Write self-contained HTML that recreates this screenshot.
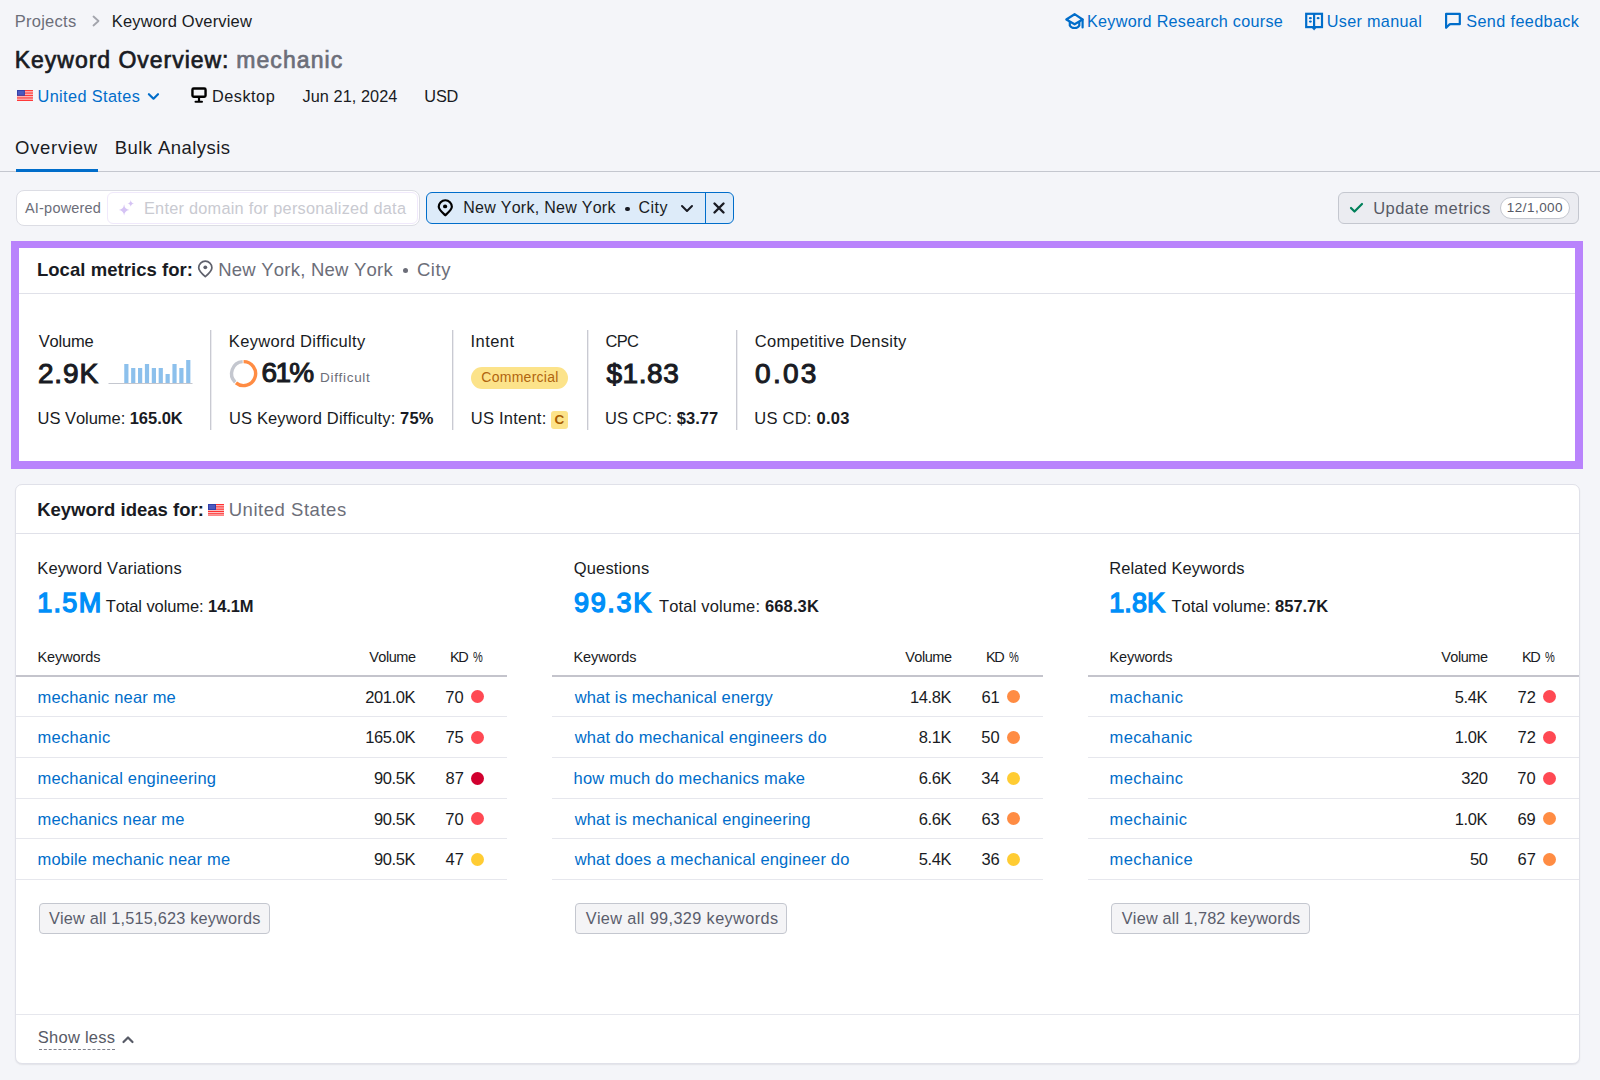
<!DOCTYPE html>
<html><head><meta charset="utf-8"><title>Keyword Overview</title>
<style>
html,body{margin:0;padding:0;}
body{width:1600px;height:1080px;overflow:hidden;position:relative;background:#f4f5f9;font-family:"Liberation Sans",sans-serif;}
.t{position:absolute;white-space:nowrap;font-kerning:none;font-feature-settings:"kern" 0;}
b{font-weight:700;}
svg{overflow:visible}
</style></head><body>
<div class="t" style="left:14.65px;top:10.78px;font-size:16.5px;line-height:20px;color:#6c6e79;letter-spacing:0.271px;">Projects</div>
<svg style="position:absolute;left:90px;top:14px" width="12" height="14" viewBox="0 0 12 14"><path d="M3.5 2.5 L8.5 7 L3.5 11.5" fill="none" stroke="#a3a5ad" stroke-width="1.8" stroke-linecap="round" stroke-linejoin="round"/></svg>
<div class="t" style="left:111.75px;top:10.78px;font-size:16.5px;line-height:20px;color:#191b23;letter-spacing:0.168px;">Keyword Overview</div>
<div class="t" style="left:14.75px;top:46.03px;font-size:23px;line-height:28px;color:#191b23;letter-spacing:0.976px;"><span style="-webkit-text-stroke:0.69px currentColor">Keyword Overview:</span></div>
<div class="t" style="left:236.20px;top:46.03px;font-size:23px;line-height:28px;color:#6c6e79;letter-spacing:1.095px;"><span style="-webkit-text-stroke:0.69px currentColor">mechanic</span></div>
<svg style="position:absolute;left:17px;top:90px" width="15.6" height="11" viewBox="0 0 15.6 11"><rect width="15.6" height="11" fill="#fbe3e3"/><rect y="0.000" width="16" height="0.846" fill="#ff1a1a"/><rect y="1.692" width="16" height="0.846" fill="#ff1a1a"/><rect y="3.385" width="16" height="0.846" fill="#ff1a1a"/><rect y="5.077" width="16" height="0.846" fill="#ff1a1a"/><rect y="6.769" width="16" height="0.846" fill="#ff1a1a"/><rect y="8.462" width="16" height="0.846" fill="#ff1a1a"/><rect y="10.154" width="16" height="0.846" fill="#ff1a1a"/><rect width="7.9" height="5.8" fill="#3340a8"/><rect x="1" y="1" width="5.9" height="3.8" fill="#5b6ad0" opacity="0.6"/></svg>
<div class="t" style="left:37.50px;top:86.35px;font-size:16.3px;line-height:20px;color:#006dca;letter-spacing:0.383px;">United States</div>
<svg style="position:absolute;left:146px;top:91px" width="14" height="10" viewBox="0 0 14 10"><path d="M2.9 3.2 L7.5 7.7 L12 3.2" fill="none" stroke="#006dca" stroke-width="2.2" stroke-linecap="round" stroke-linejoin="round"/></svg>
<svg style="position:absolute;left:190px;top:87px" width="18" height="17" viewBox="0 0 18 17"><rect x="2.45" y="1.45" width="13.1" height="8.35" rx="1.2" fill="none" stroke="#000" stroke-width="2.4"/><rect x="7.9" y="11" width="2.2" height="3" fill="#000"/><rect x="4.5" y="13.75" width="8.5" height="2" rx="1" fill="#000"/></svg>
<div class="t" style="left:212.10px;top:86.35px;font-size:16.3px;line-height:20px;color:#191b23;letter-spacing:0.478px;">Desktop</div>
<div class="t" style="left:302.55px;top:86.35px;font-size:16.3px;line-height:20px;color:#191b23;letter-spacing:0.059px;">Jun 21, 2024</div>
<div class="t" style="left:424.35px;top:86.35px;font-size:16.3px;line-height:20px;color:#191b23;letter-spacing:-0.196px;">USD</div>
<svg style="position:absolute;left:1064px;top:12px" width="21" height="19" viewBox="0 0 21 19"><path d="M10.6 2.2 L18.6 7.5 L10.6 12.3 L2.3 7.5 Z" fill="none" stroke="#006dca" stroke-width="2.2" stroke-linejoin="round"/><path d="M5.8 9.5 V13.5 C7.5 16.8 13.7 16.8 15.3 13.5 V9.5" fill="none" stroke="#006dca" stroke-width="2.2"/><path d="M18.6 7.5 V15.5" stroke="#006dca" stroke-width="2.2" stroke-linecap="round"/></svg>
<div class="t" style="left:1087.00px;top:12.08px;font-size:16.2px;line-height:19px;color:#006dca;letter-spacing:0.269px;">Keyword Research course</div>
<svg style="position:absolute;left:1304px;top:12px" width="20" height="20" viewBox="0 0 20 20"><rect x="2.2" y="1.8" width="15.8" height="13.3" fill="none" stroke="#006dca" stroke-width="2.2"/><path d="M10.1 1.8 V15.5" stroke="#006dca" stroke-width="2.2"/><path d="M8 16 H12.2 L10.1 18.4 Z" fill="#006dca"/><ellipse cx="6.4" cy="6.2" rx="1.5" ry="1.1" fill="#006dca"/><ellipse cx="6.4" cy="9.6" rx="1.5" ry="1.1" fill="#006dca"/><ellipse cx="14.1" cy="6.2" rx="1.5" ry="1.1" fill="#006dca"/></svg>
<div class="t" style="left:1326.75px;top:12.08px;font-size:16.2px;line-height:19px;color:#006dca;letter-spacing:0.326px;">User manual</div>
<svg style="position:absolute;left:1444px;top:12px" width="18" height="18" viewBox="0 0 18 18"><path d="M2.1 1.8 H15.8 V12.2 H6.8 Q5.5 12.2 4.6 13.2 L2.1 15.8 Z" fill="none" stroke="#006dca" stroke-width="2.2" stroke-linejoin="round"/></svg>
<div class="t" style="left:1466.30px;top:12.08px;font-size:16.2px;line-height:19px;color:#006dca;letter-spacing:0.381px;">Send feedback</div>
<div class="t" style="left:15.05px;top:137.29px;font-size:18.5px;line-height:22px;color:#191b23;letter-spacing:0.709px;">Overview</div>
<div class="t" style="left:114.75px;top:137.29px;font-size:18.5px;line-height:22px;color:#191b23;letter-spacing:0.440px;">Bulk Analysis</div>
<div style="position:absolute;left:0px;top:171px;width:1600px;height:1px;background:#c4c7cf"></div>
<div style="position:absolute;left:16px;top:169px;width:82px;height:3px;background:#006dca"></div>
<div style="position:absolute;left:16px;top:190px;width:404px;height:36px;box-sizing:border-box;background:#fff;border:1px solid #dcdde4;border-radius:8px"></div>
<div class="t" style="left:25.00px;top:200.07px;font-size:14.5px;line-height:17px;color:#6c6e79;letter-spacing:0.196px;">AI-powered</div>
<div style="position:absolute;left:107px;top:192px;width:311px;height:32px;box-sizing:border-box;background:#fff;border:1px solid #f0e9fb;border-radius:6px"></div>
<svg style="position:absolute;left:110px;top:195px" width="30" height="27" viewBox="0 0 30 27"><path d="M14.1 9.3 Q14.7 14.4 19.3 15 Q14.7 15.6 14.1 20.6 Q13.5 15.6 8.9 15 Q13.5 14.4 14.1 9.3 Z" fill="#d5c3f4"/><path d="M20.75 4.9 Q21.15 8 24.2 8.4 Q21.15 8.8 20.75 11.7 Q20.35 8.8 17.3 8.4 Q20.35 8 20.75 4.9 Z" fill="#d5c3f4"/></svg>
<div class="t" style="left:144.00px;top:198.35px;font-size:16.3px;line-height:20px;color:#c9cad1;letter-spacing:0.258px;">Enter domain for personalized data</div>
<div style="position:absolute;left:426px;top:192px;width:308px;height:32px;box-sizing:border-box;background:#ddebf9;border:1px solid #006dca;border-radius:6px"></div>
<div style="position:absolute;left:704.5px;top:192px;width:1px;height:32px;background:#006dca"></div>
<svg style="position:absolute;left:436px;top:198px" width="18" height="20" viewBox="0 0 18 20"><path d="M9.3 17.3 C6 14.2 2.75 11.6 2.75 8.8 A6.55 6.55 0 0 1 15.85 8.8 C15.85 11.6 12.6 14.2 9.3 17.3 Z" fill="none" stroke="#000" stroke-width="2.2" stroke-linejoin="round"/><ellipse cx="9.1" cy="8.4" rx="2.1" ry="1.9" fill="#000"/></svg>
<div class="t" style="left:463.20px;top:198.15px;font-size:16px;line-height:19px;color:#191b23;letter-spacing:0.274px;">New York, New York</div>
<div style="position:absolute;left:625px;top:206.5px;width:4.5px;height:4.5px;background:#191b23;border-radius:50%"></div>
<div class="t" style="left:638.45px;top:198.15px;font-size:16px;line-height:19px;color:#191b23;letter-spacing:0.498px;">City</div>
<svg style="position:absolute;left:680px;top:203px" width="14" height="11" viewBox="0 0 14 11"><path d="M2 3 L7 8 L12 3" fill="none" stroke="#191b23" stroke-width="2" stroke-linecap="round" stroke-linejoin="round"/></svg>
<svg style="position:absolute;left:712px;top:201px" width="14" height="14" viewBox="0 0 14 14"><path d="M2.5 2.5 L11.5 11.5 M11.5 2.5 L2.5 11.5" stroke="#191b23" stroke-width="2.4" stroke-linecap="round"/></svg>
<div style="position:absolute;left:1338px;top:192px;width:241px;height:32px;box-sizing:border-box;background:#ebecf1;border:1px solid #c4c7cf;border-radius:6px"></div>
<svg style="position:absolute;left:1349px;top:202px" width="15" height="12" viewBox="0 0 15 12"><path d="M2 6 L5.5 9.5 L13 2" fill="none" stroke="#00805a" stroke-width="2.2" stroke-linecap="round" stroke-linejoin="round"/></svg>
<div class="t" style="left:1373.15px;top:198.03px;font-size:16.5px;line-height:20px;color:#575a66;letter-spacing:0.476px;">Update metrics</div>
<div style="position:absolute;left:1500px;top:197px;width:70px;height:22px;box-sizing:border-box;background:#fff;border:1px solid #c4c7cf;border-radius:11px"></div>
<div class="t" style="left:1506.75px;top:199.82px;font-size:13.5px;line-height:16px;color:#575a66;letter-spacing:0.473px;">12/1,000</div>
<div style="position:absolute;left:11px;top:241px;width:1572px;height:228px;box-sizing:border-box;background:#fff;border:8px solid #b983fc;border-top-width:7.5px"></div>
<div class="t" style="left:36.90px;top:258.59px;font-size:18.5px;line-height:22px;color:#191b23;letter-spacing:0.051px;"><b>Local metrics for:</b></div>
<svg style="position:absolute;left:196px;top:259px" width="18" height="20" viewBox="0 0 18 20"><path d="M9.3 17.6 C6 14.8 2.7 11.9 2.7 8.7 A6.6 6.6 0 0 1 15.9 8.7 C15.9 11.9 12.6 14.8 9.3 17.6 Z" fill="none" stroke="#5f616c" stroke-width="1.7" stroke-linejoin="round"/><circle cx="9.3" cy="8.3" r="1.9" fill="#5f616c"/></svg>
<div class="t" style="left:218.20px;top:258.59px;font-size:18.5px;line-height:22px;color:#6c6e79;letter-spacing:0.229px;">New York, New York</div>
<div style="position:absolute;left:403px;top:268px;width:5px;height:5px;background:#6c6e79;border-radius:50%"></div>
<div class="t" style="left:416.90px;top:258.59px;font-size:18.5px;line-height:22px;color:#6c6e79;letter-spacing:0.613px;">City</div>
<div style="position:absolute;left:19px;top:293px;width:1556px;height:1px;background:#e0e1e9"></div>
<div class="t" style="left:38.75px;top:331.38px;font-size:16.5px;line-height:20px;color:#191b23;letter-spacing:-0.214px;">Volume</div>
<div class="t" style="left:37.90px;top:356.59px;font-size:28px;line-height:34px;color:#191b23;letter-spacing:0.892px;"><span style="-webkit-text-stroke:1.06px currentColor">2.9K</span></div>
<svg style="position:absolute;left:108px;top:358px" width="85" height="27" viewBox="0 0 85 27"><rect x="16.26" y="6.00" width="4.2" height="19" fill="#8cc0ec"/><rect x="23.14" y="10.00" width="4.2" height="15" fill="#8cc0ec"/><rect x="30.02" y="10.00" width="4.2" height="15" fill="#8cc0ec"/><rect x="36.90" y="6.00" width="4.2" height="19" fill="#8cc0ec"/><rect x="43.78" y="10.00" width="4.2" height="15" fill="#8cc0ec"/><rect x="50.66" y="10.00" width="4.2" height="15" fill="#8cc0ec"/><rect x="57.54" y="16.00" width="4.2" height="9" fill="#8cc0ec"/><rect x="64.42" y="6.00" width="4.2" height="19" fill="#8cc0ec"/><rect x="71.30" y="10.00" width="4.2" height="15" fill="#8cc0ec"/><rect x="78.18" y="2.00" width="4.2" height="23" fill="#8cc0ec"/><rect x="0.5" y="25" width="84" height="1" fill="#c4c7cf"/></svg>
<div class="t" style="left:37.55px;top:408.38px;font-size:16.5px;line-height:20px;color:#191b23;letter-spacing:-0.041px;">US Volume: <b>165.0K</b></div>
<div style="position:absolute;left:210px;top:330px;width:2px;height:100px;background:linear-gradient(90deg,#c9cad2 50%,#ececf0 50%)"></div>
<div class="t" style="left:228.85px;top:331.38px;font-size:16.5px;line-height:20px;color:#191b23;letter-spacing:0.308px;">Keyword Difficulty</div>
<svg style="position:absolute;left:229.8px;top:359.7px" width="28" height="28" viewBox="0 0 28 28"><path d="M13.60 1.60 A12 12 0 1 1 5.95 22.85" fill="none" stroke="#ff8c43" stroke-width="3.4"/><path d="M5.24 22.21 A12 12 0 0 1 12.64 1.64" fill="none" stroke="#c4c7cf" stroke-width="3.4"/></svg>
<div class="t" style="left:261.50px;top:355.99px;font-size:28px;line-height:34px;color:#191b23;letter-spacing:-1.673px;"><span style="-webkit-text-stroke:1.06px currentColor">61%</span></div>
<div class="t" style="left:320.10px;top:370.02px;font-size:13.5px;line-height:16px;color:#6c6e79;letter-spacing:0.674px;">Difficult</div>
<div class="t" style="left:228.95px;top:407.98px;font-size:16.5px;line-height:20px;color:#191b23;letter-spacing:0.146px;">US Keyword Difficulty: <b>75%</b></div>
<div style="position:absolute;left:452px;top:330px;width:2px;height:100px;background:linear-gradient(90deg,#c9cad2 50%,#ececf0 50%)"></div>
<div class="t" style="left:470.50px;top:331.38px;font-size:16.5px;line-height:20px;color:#191b23;letter-spacing:0.460px;">Intent</div>
<div style="position:absolute;left:471px;top:367px;width:96.5px;height:22px;background:#fce38a;border-radius:11px"></div>
<div class="t" style="left:481.30px;top:368.65px;font-size:14px;line-height:17px;color:#b0650f;letter-spacing:0.270px;">Commercial</div>
<div class="t" style="left:470.75px;top:408.28px;font-size:16.5px;line-height:20px;color:#191b23;letter-spacing:0.236px;">US Intent: </div>
<div style="position:absolute;left:550.8px;top:411px;width:17.7px;height:17.7px;background:#fce38a;border-radius:3px"></div>
<div class="t" style="left:554.45px;top:411.52px;font-size:13.5px;line-height:16px;color:#a85a00;letter-spacing:-0.250px;"><b>C</b></div>
<div style="position:absolute;left:587px;top:330px;width:2px;height:100px;background:linear-gradient(90deg,#c9cad2 50%,#ececf0 50%)"></div>
<div class="t" style="left:605.45px;top:331.38px;font-size:16.5px;line-height:20px;color:#191b23;letter-spacing:-0.636px;">CPC</div>
<div class="t" style="left:606.40px;top:356.69px;font-size:28px;line-height:34px;color:#191b23;letter-spacing:0.563px;"><span style="-webkit-text-stroke:1.06px currentColor">$1.83</span></div>
<div class="t" style="left:605.00px;top:408.28px;font-size:16.5px;line-height:20px;color:#191b23;letter-spacing:0.031px;">US CPC: <b>$3.77</b></div>
<div style="position:absolute;left:736px;top:330px;width:2px;height:100px;background:linear-gradient(90deg,#c9cad2 50%,#ececf0 50%)"></div>
<div class="t" style="left:754.80px;top:331.38px;font-size:16.5px;line-height:20px;color:#191b23;letter-spacing:0.263px;">Competitive Density</div>
<div class="t" style="left:755.05px;top:356.69px;font-size:28px;line-height:34px;color:#191b23;letter-spacing:2.258px;"><span style="-webkit-text-stroke:1.06px currentColor">0.03</span></div>
<div class="t" style="left:754.35px;top:408.28px;font-size:16.5px;line-height:20px;color:#191b23;letter-spacing:0.236px;">US CD: <b>0.03</b></div>
<div style="position:absolute;left:15px;top:484px;width:1565px;height:580px;box-sizing:border-box;background:#fff;border:1px solid #e0e1e9;border-radius:7px;box-shadow:0 1px 1.5px rgba(25,27,35,0.08)"></div>
<div class="t" style="left:37.15px;top:498.69px;font-size:18.5px;line-height:22px;color:#191b23;letter-spacing:0.010px;"><b>Keyword ideas for:</b></div>
<svg style="position:absolute;left:208.3px;top:504px" width="16" height="11.5" viewBox="0 0 16 11.5"><rect width="16" height="11.5" fill="#fbe3e3"/><rect y="0.000" width="16" height="0.885" fill="#ff1a1a"/><rect y="1.769" width="16" height="0.885" fill="#ff1a1a"/><rect y="3.538" width="16" height="0.885" fill="#ff1a1a"/><rect y="5.308" width="16" height="0.885" fill="#ff1a1a"/><rect y="7.077" width="16" height="0.885" fill="#ff1a1a"/><rect y="8.846" width="16" height="0.885" fill="#ff1a1a"/><rect y="10.615" width="16" height="0.885" fill="#ff1a1a"/><rect width="8" height="6" fill="#3340a8"/><rect x="1" y="1" width="6" height="4" fill="#5b6ad0" opacity="0.6"/></svg>
<div class="t" style="left:228.70px;top:498.69px;font-size:18.5px;line-height:22px;color:#6c6e79;letter-spacing:0.532px;">United States</div>
<div style="position:absolute;left:16px;top:533px;width:1564px;height:1px;background:#e0e1e9"></div>
<div class="t" style="left:37.25px;top:557.98px;font-size:16.5px;line-height:20px;color:#191b23;letter-spacing:0.132px;">Keyword Variations</div>
<div class="t" style="left:37.15px;top:586.64px;font-size:27px;line-height:32px;color:#008ff8;letter-spacing:1.339px;"><span style="-webkit-text-stroke:1.40px currentColor">1.5M</span></div>
<div class="t" style="left:105.65px;top:596.28px;font-size:16.5px;line-height:20px;color:#191b23;letter-spacing:-0.086px;">Total volume: <b>14.1M</b></div>
<div class="t" style="left:37.45px;top:648.67px;font-size:14.5px;line-height:17px;color:#191b23;letter-spacing:-0.073px;">Keywords</div>
<div class="t" style="left:369.15px;top:648.67px;font-size:14.5px;line-height:17px;color:#191b23;letter-spacing:-0.460px;">Volume</div>
<div class="t" style="left:449.95px;top:648.67px;font-size:14.5px;line-height:17px;color:#191b23;letter-spacing:-1.321px;">KD</div>
<div class="t" style="left:473.40px;top:648.67px;font-size:14.5px;line-height:17px;color:#191b23;letter-spacing:0.000px;transform:scaleX(0.76);transform-origin:0 0;">%</div>
<div style="position:absolute;left:16px;top:675px;width:490.5px;height:2px;background:#c4c4cc"></div>
<div class="t" style="left:37.55px;top:686.78px;font-size:16.5px;line-height:20px;color:#006dca;letter-spacing:0.163px;">mechanic near me</div>
<div class="t" style="left:365.16px;top:686.78px;font-size:16.5px;line-height:20px;color:#191b23;letter-spacing:-0.400px;">201.0K</div>
<div class="t" style="left:445.37px;top:686.78px;font-size:16.5px;line-height:20px;color:#191b23;letter-spacing:-0.100px;">70</div>
<div style="position:absolute;left:470.8px;top:690.2px;width:13px;height:13px;background:#ff4953;border-radius:50%"></div>
<div style="position:absolute;left:16px;top:716px;width:490.5px;height:1px;background:#e6e7ed"></div>
<div class="t" style="left:37.55px;top:727.43px;font-size:16.5px;line-height:20px;color:#006dca;letter-spacing:0.291px;">mechanic</div>
<div class="t" style="left:365.16px;top:727.43px;font-size:16.5px;line-height:20px;color:#191b23;letter-spacing:-0.400px;">165.0K</div>
<div class="t" style="left:445.42px;top:727.43px;font-size:16.5px;line-height:20px;color:#191b23;letter-spacing:-0.100px;">75</div>
<div style="position:absolute;left:470.8px;top:730.85px;width:13px;height:13px;background:#ff4953;border-radius:50%"></div>
<div style="position:absolute;left:16px;top:757px;width:490.5px;height:1px;background:#e6e7ed"></div>
<div class="t" style="left:37.55px;top:768.08px;font-size:16.5px;line-height:20px;color:#006dca;letter-spacing:0.200px;">mechanical engineering</div>
<div class="t" style="left:373.94px;top:768.08px;font-size:16.5px;line-height:20px;color:#191b23;letter-spacing:-0.400px;">90.5K</div>
<div class="t" style="left:445.57px;top:768.08px;font-size:16.5px;line-height:20px;color:#191b23;letter-spacing:-0.100px;">87</div>
<div style="position:absolute;left:470.8px;top:771.5px;width:13px;height:13px;background:#d1002f;border-radius:50%"></div>
<div style="position:absolute;left:16px;top:798px;width:490.5px;height:1px;background:#e6e7ed"></div>
<div class="t" style="left:37.55px;top:808.73px;font-size:16.5px;line-height:20px;color:#006dca;letter-spacing:0.181px;">mechanics near me</div>
<div class="t" style="left:373.94px;top:808.73px;font-size:16.5px;line-height:20px;color:#191b23;letter-spacing:-0.400px;">90.5K</div>
<div class="t" style="left:445.37px;top:808.73px;font-size:16.5px;line-height:20px;color:#191b23;letter-spacing:-0.100px;">70</div>
<div style="position:absolute;left:470.8px;top:812.1500000000001px;width:13px;height:13px;background:#ff4953;border-radius:50%"></div>
<div style="position:absolute;left:16px;top:838px;width:490.5px;height:1px;background:#e6e7ed"></div>
<div class="t" style="left:37.55px;top:849.38px;font-size:16.5px;line-height:20px;color:#006dca;letter-spacing:0.166px;">mobile mechanic near me</div>
<div class="t" style="left:373.94px;top:849.38px;font-size:16.5px;line-height:20px;color:#191b23;letter-spacing:-0.400px;">90.5K</div>
<div class="t" style="left:445.57px;top:849.38px;font-size:16.5px;line-height:20px;color:#191b23;letter-spacing:-0.100px;">47</div>
<div style="position:absolute;left:470.8px;top:852.8000000000001px;width:13px;height:13px;background:#ffcc33;border-radius:50%"></div>
<div style="position:absolute;left:16px;top:879px;width:490.5px;height:1px;background:#e6e7ed"></div>
<div style="position:absolute;left:38.5px;top:902.5px;width:231.5px;height:31.5px;box-sizing:border-box;background:#f4f4f6;border:1px solid #c4c7cf;border-radius:4px"></div>
<div class="t" style="left:48.95px;top:907.65px;font-size:16.3px;line-height:20px;color:#5a5d6c;letter-spacing:0.193px;">View all 1,515,623 keywords</div>
<div class="t" style="left:573.85px;top:557.98px;font-size:16.5px;line-height:20px;color:#191b23;letter-spacing:0.126px;">Questions</div>
<div class="t" style="left:573.95px;top:586.64px;font-size:27px;line-height:32px;color:#008ff8;letter-spacing:1.687px;"><span style="-webkit-text-stroke:1.40px currentColor">99.3K</span></div>
<div class="t" style="left:659.05px;top:596.28px;font-size:16.5px;line-height:20px;color:#191b23;letter-spacing:0.157px;">Total volume: <b>668.3K</b></div>
<div class="t" style="left:573.45px;top:648.67px;font-size:14.5px;line-height:17px;color:#191b23;letter-spacing:-0.073px;">Keywords</div>
<div class="t" style="left:905.15px;top:648.67px;font-size:14.5px;line-height:17px;color:#191b23;letter-spacing:-0.460px;">Volume</div>
<div class="t" style="left:985.95px;top:648.67px;font-size:14.5px;line-height:17px;color:#191b23;letter-spacing:-1.321px;">KD</div>
<div class="t" style="left:1009.40px;top:648.67px;font-size:14.5px;line-height:17px;color:#191b23;letter-spacing:0.000px;transform:scaleX(0.76);transform-origin:0 0;">%</div>
<div style="position:absolute;left:552px;top:675px;width:490.5px;height:2px;background:#c4c4cc"></div>
<div class="t" style="left:574.65px;top:686.78px;font-size:16.5px;line-height:20px;color:#006dca;letter-spacing:0.155px;">what is mechanical energy</div>
<div class="t" style="left:909.94px;top:686.78px;font-size:16.5px;line-height:20px;color:#191b23;letter-spacing:-0.400px;">14.8K</div>
<div class="t" style="left:981.52px;top:686.78px;font-size:16.5px;line-height:20px;color:#191b23;letter-spacing:-0.100px;">61</div>
<div style="position:absolute;left:1006.8px;top:690.2px;width:13px;height:13px;background:#ff8c43;border-radius:50%"></div>
<div style="position:absolute;left:552px;top:716px;width:490.5px;height:1px;background:#e6e7ed"></div>
<div class="t" style="left:574.65px;top:727.43px;font-size:16.5px;line-height:20px;color:#006dca;letter-spacing:0.203px;">what do mechanical engineers do</div>
<div class="t" style="left:918.71px;top:727.43px;font-size:16.5px;line-height:20px;color:#191b23;letter-spacing:-0.400px;">8.1K</div>
<div class="t" style="left:981.37px;top:727.43px;font-size:16.5px;line-height:20px;color:#191b23;letter-spacing:-0.100px;">50</div>
<div style="position:absolute;left:1006.8px;top:730.85px;width:13px;height:13px;background:#ff8c43;border-radius:50%"></div>
<div style="position:absolute;left:552px;top:757px;width:490.5px;height:1px;background:#e6e7ed"></div>
<div class="t" style="left:573.50px;top:768.08px;font-size:16.5px;line-height:20px;color:#006dca;letter-spacing:0.200px;">how much do mechanics make</div>
<div class="t" style="left:918.71px;top:768.08px;font-size:16.5px;line-height:20px;color:#191b23;letter-spacing:-0.400px;">6.6K</div>
<div class="t" style="left:981.22px;top:768.08px;font-size:16.5px;line-height:20px;color:#191b23;letter-spacing:-0.100px;">34</div>
<div style="position:absolute;left:1006.8px;top:771.5px;width:13px;height:13px;background:#ffcc33;border-radius:50%"></div>
<div style="position:absolute;left:552px;top:798px;width:490.5px;height:1px;background:#e6e7ed"></div>
<div class="t" style="left:574.65px;top:808.73px;font-size:16.5px;line-height:20px;color:#006dca;letter-spacing:0.188px;">what is mechanical engineering</div>
<div class="t" style="left:918.71px;top:808.73px;font-size:16.5px;line-height:20px;color:#191b23;letter-spacing:-0.400px;">6.6K</div>
<div class="t" style="left:981.42px;top:808.73px;font-size:16.5px;line-height:20px;color:#191b23;letter-spacing:-0.100px;">63</div>
<div style="position:absolute;left:1006.8px;top:812.1500000000001px;width:13px;height:13px;background:#ff8c43;border-radius:50%"></div>
<div style="position:absolute;left:552px;top:838px;width:490.5px;height:1px;background:#e6e7ed"></div>
<div class="t" style="left:574.65px;top:849.38px;font-size:16.5px;line-height:20px;color:#006dca;letter-spacing:0.181px;">what does a mechanical engineer do</div>
<div class="t" style="left:918.71px;top:849.38px;font-size:16.5px;line-height:20px;color:#191b23;letter-spacing:-0.400px;">5.4K</div>
<div class="t" style="left:981.42px;top:849.38px;font-size:16.5px;line-height:20px;color:#191b23;letter-spacing:-0.100px;">36</div>
<div style="position:absolute;left:1006.8px;top:852.8000000000001px;width:13px;height:13px;background:#ffcc33;border-radius:50%"></div>
<div style="position:absolute;left:552px;top:879px;width:490.5px;height:1px;background:#e6e7ed"></div>
<div style="position:absolute;left:574.5px;top:902.5px;width:212px;height:31.5px;box-sizing:border-box;background:#f4f4f6;border:1px solid #c4c7cf;border-radius:4px"></div>
<div class="t" style="left:585.65px;top:907.65px;font-size:16.3px;line-height:20px;color:#5a5d6c;letter-spacing:0.377px;">View all 99,329 keywords</div>
<div class="t" style="left:1109.25px;top:557.98px;font-size:16.5px;line-height:20px;color:#191b23;letter-spacing:0.087px;">Related Keywords</div>
<div class="t" style="left:1109.15px;top:586.64px;font-size:27px;line-height:32px;color:#008ff8;letter-spacing:0.122px;"><span style="-webkit-text-stroke:1.40px currentColor">1.8K</span></div>
<div class="t" style="left:1171.55px;top:596.28px;font-size:16.5px;line-height:20px;color:#191b23;letter-spacing:-0.009px;">Total volume: <b>857.7K</b></div>
<div class="t" style="left:1109.45px;top:648.67px;font-size:14.5px;line-height:17px;color:#191b23;letter-spacing:-0.073px;">Keywords</div>
<div class="t" style="left:1441.15px;top:648.67px;font-size:14.5px;line-height:17px;color:#191b23;letter-spacing:-0.460px;">Volume</div>
<div class="t" style="left:1521.95px;top:648.67px;font-size:14.5px;line-height:17px;color:#191b23;letter-spacing:-1.321px;">KD</div>
<div class="t" style="left:1545.40px;top:648.67px;font-size:14.5px;line-height:17px;color:#191b23;letter-spacing:0.000px;transform:scaleX(0.76);transform-origin:0 0;">%</div>
<div style="position:absolute;left:1088px;top:675px;width:490.5px;height:2px;background:#c4c4cc"></div>
<div class="t" style="left:1109.55px;top:686.78px;font-size:16.5px;line-height:20px;color:#006dca;letter-spacing:0.405px;">machanic</div>
<div class="t" style="left:1454.71px;top:686.78px;font-size:16.5px;line-height:20px;color:#191b23;letter-spacing:-0.400px;">5.4K</div>
<div class="t" style="left:1517.57px;top:686.78px;font-size:16.5px;line-height:20px;color:#191b23;letter-spacing:-0.100px;">72</div>
<div style="position:absolute;left:1542.8px;top:690.2px;width:13px;height:13px;background:#ff4953;border-radius:50%"></div>
<div style="position:absolute;left:1088px;top:716px;width:490.5px;height:1px;background:#e6e7ed"></div>
<div class="t" style="left:1109.55px;top:727.43px;font-size:16.5px;line-height:20px;color:#006dca;letter-spacing:0.370px;">mecahanic</div>
<div class="t" style="left:1454.71px;top:727.43px;font-size:16.5px;line-height:20px;color:#191b23;letter-spacing:-0.400px;">1.0K</div>
<div class="t" style="left:1517.57px;top:727.43px;font-size:16.5px;line-height:20px;color:#191b23;letter-spacing:-0.100px;">72</div>
<div style="position:absolute;left:1542.8px;top:730.85px;width:13px;height:13px;background:#ff4953;border-radius:50%"></div>
<div style="position:absolute;left:1088px;top:757px;width:490.5px;height:1px;background:#e6e7ed"></div>
<div class="t" style="left:1109.55px;top:768.08px;font-size:16.5px;line-height:20px;color:#006dca;letter-spacing:0.405px;">mechainc</div>
<div class="t" style="left:1461.20px;top:768.08px;font-size:16.5px;line-height:20px;color:#191b23;letter-spacing:-0.400px;">320</div>
<div class="t" style="left:1517.37px;top:768.08px;font-size:16.5px;line-height:20px;color:#191b23;letter-spacing:-0.100px;">70</div>
<div style="position:absolute;left:1542.8px;top:771.5px;width:13px;height:13px;background:#ff4953;border-radius:50%"></div>
<div style="position:absolute;left:1088px;top:798px;width:490.5px;height:1px;background:#e6e7ed"></div>
<div class="t" style="left:1109.55px;top:808.73px;font-size:16.5px;line-height:20px;color:#006dca;letter-spacing:0.408px;">mechainic</div>
<div class="t" style="left:1454.71px;top:808.73px;font-size:16.5px;line-height:20px;color:#191b23;letter-spacing:-0.400px;">1.0K</div>
<div class="t" style="left:1517.52px;top:808.73px;font-size:16.5px;line-height:20px;color:#191b23;letter-spacing:-0.100px;">69</div>
<div style="position:absolute;left:1542.8px;top:812.1500000000001px;width:13px;height:13px;background:#ff8c43;border-radius:50%"></div>
<div style="position:absolute;left:1088px;top:838px;width:490.5px;height:1px;background:#e6e7ed"></div>
<div class="t" style="left:1109.55px;top:849.38px;font-size:16.5px;line-height:20px;color:#006dca;letter-spacing:0.410px;">mechanice</div>
<div class="t" style="left:1469.97px;top:849.38px;font-size:16.5px;line-height:20px;color:#191b23;letter-spacing:-0.400px;">50</div>
<div class="t" style="left:1517.57px;top:849.38px;font-size:16.5px;line-height:20px;color:#191b23;letter-spacing:-0.100px;">67</div>
<div style="position:absolute;left:1542.8px;top:852.8000000000001px;width:13px;height:13px;background:#ff8c43;border-radius:50%"></div>
<div style="position:absolute;left:1088px;top:879px;width:490.5px;height:1px;background:#e6e7ed"></div>
<div style="position:absolute;left:1110.5px;top:902.5px;width:199px;height:31.5px;box-sizing:border-box;background:#f4f4f6;border:1px solid #c4c7cf;border-radius:4px"></div>
<div class="t" style="left:1121.85px;top:907.65px;font-size:16.3px;line-height:20px;color:#5a5d6c;letter-spacing:0.170px;">View all 1,782 keywords</div>
<div style="position:absolute;left:16px;top:1013.5px;width:1564px;height:1px;background:#e6e7ed"></div>
<div class="t" style="left:37.75px;top:1027.28px;font-size:16.5px;line-height:20px;color:#575a66;letter-spacing:0.262px;">Show less</div>
<div style="position:absolute;left:38.5px;top:1048.5px;width:76px;height:0;border-top:1.5px dashed #80828d"></div>
<svg style="position:absolute;left:120px;top:1033px" width="16" height="12" viewBox="0 0 16 12"><path d="M3.5 9 L8 4.5 L12.5 9" fill="none" stroke="#575a66" stroke-width="2.2" stroke-linecap="round" stroke-linejoin="round"/></svg>
</body></html>
